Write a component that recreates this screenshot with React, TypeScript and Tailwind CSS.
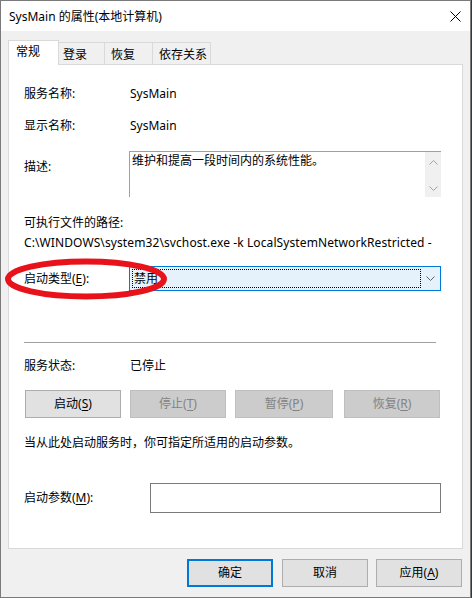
import React from "react";

const Key = ({ children }: { children: React.ReactNode }) => (
  <span className="underline underline-offset-[2px] decoration-1">{children}</span>
);

type BtnProps = {
  children: React.ReactNode;
  width: string;
  disabled?: boolean;
  primary?: boolean;
  className?: string;
};

const Button = ({ children, width, disabled, primary, className }: BtnProps) => {
  const tone = disabled
    ? "bg-[#cccccc] border-[#bfbfbf] text-[#838383]"
    : primary
      ? "bg-[#e1e1e1] border-2 border-[#0078d7] text-black"
      : "bg-[#e1e1e1] border-[#adadad] text-black";
  return (
    <div
      className={`${width} h-[28px] border flex items-center justify-center ${tone} ${className ?? ""}`}
    >
      {children}
    </div>
  );
};

const Tabs = () => {
  const tabs = [
    { label: "登录", w: "w-[46px]", pl: "pl-[4px]" },
    { label: "恢复", w: "w-[48px]", pl: "pl-[6px]" },
    { label: "依存关系", w: "w-[58px]", pl: "pl-[6px]" },
  ];
  return (
    <div className="flex items-end h-[24px]">
      <div className="relative z-10 w-[51px] h-[25px] -mb-px bg-white border border-b-0 border-[#d9d9d9] pl-[7px] pt-[3px]">
        常规
      </div>
      {tabs.map((t) => (
        <div
          key={t.label}
          className={`${t.w} h-[22px] bg-[#f0f0f0] border border-b-0 border-l-0 border-[#d9d9d9] ${t.pl} pt-[4px]`}
        >
          {t.label}
        </div>
      ))}
    </div>
  );
};

const Row = ({ label, value }: { label: string; value: string }) => (
  <div className="flex h-[16px]">
    <div className="w-[105px]">{label}</div>
    <div className="pl-px">{value}</div>
  </div>
);

const Chevron = ({ up, color }: { up?: boolean; color: string }) => (
  <svg width="9" height="5" viewBox="0 0 9 5" className="block">
    <polyline
      points={up ? "0.5,4.5 4.5,0.5 8.5,4.5" : "0.5,0.5 4.5,4.5 8.5,0.5"}
      fill="none"
      stroke={color}
      strokeWidth="1"
    />
  </svg>
);

const General = () => (
  <div className="w-[455px] h-[485px] bg-white border border-[#d9d9d9] px-[15px] pt-[21px] flex flex-col">
    <Row label="服务名称:" value="SysMain" />
    <div className="mt-[16px]">
      <Row label="显示名称:" value="SysMain" />
    </div>

    <div className="mt-[17px] flex h-[46px]">
      <div className="w-[105px] pt-[8px]">描述:</div>
      <div className="w-[312px] h-[46px] flex border-t border-l border-[#a0a0a0]">
        <div className="flex-1 pl-[2px] pt-[1px]">维护和提高一段时间内的系统性能。</div>
        <div className="w-[16px] bg-[#f0f0f0] flex flex-col items-center justify-between pt-[8px] pb-[6px]">
          <Chevron up color="#a3a3a3" />
          <Chevron color="#a3a3a3" />
        </div>
      </div>
    </div>

    <div className="mt-[18px] h-[16px]">可执行文件的路径:</div>
    <div className="mt-[4px] h-[16px] whitespace-nowrap tracking-[0.1px]">
      C:\WINDOWS\system32\svchost.exe -k LocalSystemNetworkRestricted -
    </div>

    <div className="mt-[15px] flex items-center h-[25px]">
      <div className="w-[105px] pt-px">
        启动类型(<Key>E</Key>):
      </div>
      <div className="w-[312px] h-[25px] bg-[#e5f1fb] border border-[#0078d7] flex items-center pl-[2px] pr-[4px]">
        <div className="w-[289px] h-[19px] border border-dotted border-black pl-[1px] leading-[17px]">
          禁用
        </div>
        <div className="flex-1 flex justify-end pr-[1px]">
          <Chevron color="#606060" />
        </div>
      </div>
    </div>

    <div className="mt-[51px] w-[412px] h-px bg-[#a0a0a0]" />

    <div className="mt-[15px]">
      <Row label="服务状态:" value="已停止" />
    </div>

    <div className="mt-[16px] flex pl-px">
      <Button width="w-[96px]">
        启动(<Key>S</Key>)
      </Button>
      <Button width="w-[96px]" disabled className="ml-[9px]">
        停止(<Key>T</Key>)
      </Button>
      <Button width="w-[98px]" disabled className="ml-[9px]">
        暂停(<Key>P</Key>)
      </Button>
      <Button width="w-[96px]" disabled className="ml-[11px]">
        恢复(<Key>R</Key>)
      </Button>
    </div>

    <div className="mt-[17px] h-[16px]">当从此处启动服务时，你可指定所适用的启动参数。</div>

    <div className="mt-[32px] flex items-center h-[30px]">
      <div className="w-[126px]">
        启动参数(<Key>M</Key>):
      </div>
      <div className="w-[291px] h-[30px] border border-[#7a7a7a] bg-white" />
    </div>
  </div>
);

export default function App() {
  return (
    <div className="w-[472px] h-[598px] bg-[#2b3a44] font-[family-name:Noto_Sans,Noto_Sans_CJK_SC,sans-serif] text-[12px] leading-[16px] text-black">
      <div className="relative w-[471px] h-[598px] bg-[#f0f0f0] border border-[#7a7a7a] flex flex-col">
        {/* title bar */}
        <div className="h-[30px] bg-white flex items-center justify-between pl-[8px] pr-[9px] text-[12px]">
          <span className="pt-px">SysMain 的属性(本地计算机)</span>
          <svg width="11" height="11" viewBox="0 0 11 11">
            <path d="M0.5 0.5 L10.5 10.5 M10.5 0.5 L0.5 10.5" stroke="#000" strokeWidth="1" />
          </svg>
        </div>

        <div className="px-[7px] pt-[9px] flex flex-col">
          <Tabs />
          <General />
          <div className="mt-[10px] flex justify-end pr-px">
            <Button width="w-[86px]" primary>
              确定
            </Button>
            <Button width="w-[86px]" className="ml-[9px]">
              取消
            </Button>
            <Button width="w-[86px]" className="ml-[8px]">
              应用(<Key>A</Key>)
            </Button>
          </div>
        </div>

        {/* red marker ring drawn over the startup-type row */}
        <svg
          className="absolute left-[-1px] top-[254px] pointer-events-none"
          width="172"
          height="48"
          viewBox="0 0 172 48"
        >
          <ellipse cx="86" cy="24" rx="78" ry="17.5" fill="none" stroke="#e8131a" strokeWidth="6" />
        </svg>
      </div>
    </div>
  );
}
